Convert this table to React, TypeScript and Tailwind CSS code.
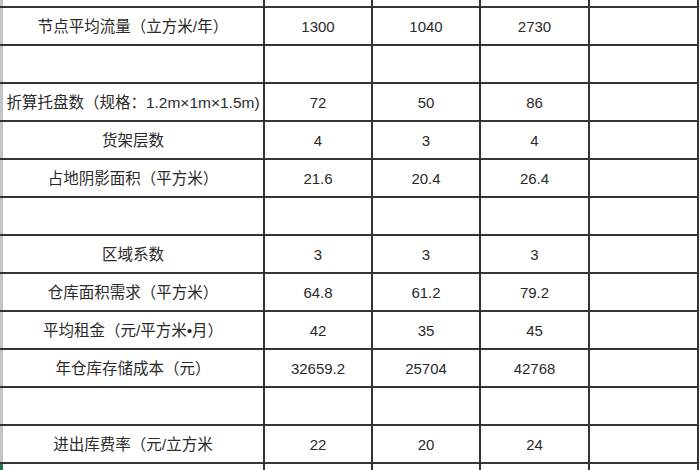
const rows: (string[] | null)[] = [
  ['', '', '', '', ''],
  ['节点平均流量（立方米/年）', '1300', '1040', '2730', ''],
  null,
  ['折算托盘数（规格：1.2m×1m×1.5m)', '72', '50', '86', ''],
  ['货架层数', '4', '3', '4', ''],
  ['占地阴影面积（平方米）', '21.6', '20.4', '26.4', ''],
  null,
  ['区域系数', '3', '3', '3', ''],
  ['仓库面积需求（平方米）', '64.8', '61.2', '79.2', ''],
  ['平均租金（元/平方米•月）', '42', '35', '45', ''],
  ['年仓库存储成本（元）', '32659.2', '25704', '42768', ''],
  null,
  ['进出库费率（元/立方米', '22', '20', '24', ''],
  ['', '', '', '', ''],
]

export default function App() {
  return (
    <div className="h-[470px] w-[700px] overflow-hidden bg-white">
      <div
        className="grid grid-cols-[263px_106px_106px_107px_107px] grid-rows-[6px_repeat(12,36px)_30px] gap-[2px] bg-[#333333] pr-[2px] text-[15px] text-[#2a2a2a]"
        style={{ fontFamily: '"Liberation Sans", "Noto Sans CJK SC", sans-serif', width: 699 }}
      >
        {rows.map((row, i) => {
          const cells = row ?? ['', '', '', '', '']
          const last = i === rows.length - 1
          return cells.map((text, j) => (
            <div
              key={`${i}-${j}`}
              className={
                j === 0
                  ? `flex items-center justify-center overflow-hidden whitespace-nowrap border-l-[3px] bg-white pt-[2px] text-[15.5px] ${
                      last ? 'border-[#217346]' : 'border-[#c4c4c4]'
                    }`
                  : 'flex items-center justify-center overflow-hidden whitespace-nowrap bg-white pt-[2px]'
              }
            >
              {text}
            </div>
          ))
        })}
      </div>
    </div>
  )
}
